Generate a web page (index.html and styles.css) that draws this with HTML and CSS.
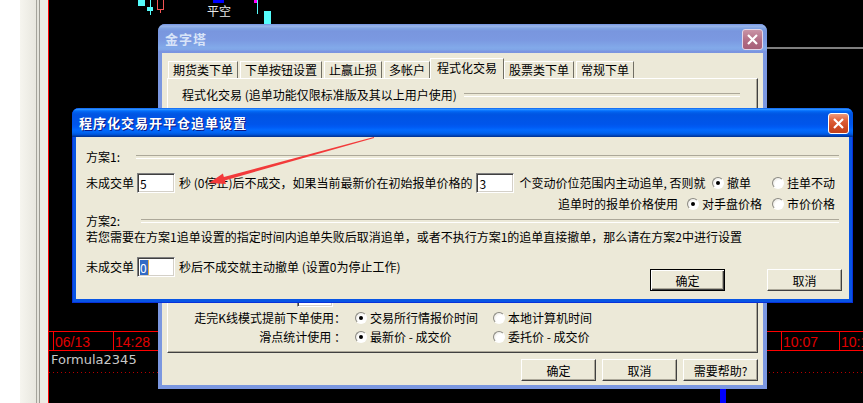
FILE: index.html
```html
<!DOCTYPE html>
<html lang="zh-CN">
<head>
    <meta charset="UTF-8">
    <title>程序化交易开平仓追单设置</title>
    <link rel="stylesheet" href="styles.css">
</head>
<body>
<div class="desktop">
    <div class="side"></div>

    <!-- chart behind the dialogs -->
    <div class="chart">
        <div class="mk k-cyan k1"></div>
        <div class="mk k-cyan k2"></div>
        <div class="mk k-cyan k3"></div>
        <div class="mk k-red"></div>
        <div class="mk k-redwick"></div>
        <div class="mk k-blue"></div>
        <span class="mk tag">平空</span>
        <div class="mk k-mag"></div>
        <div class="mk k-cyan k4"></div>
        <div class="mk k-cyan k5"></div>
        <div class="mk hline"></div>

        <div class="axis">
            <span class="tick t1">06/13</span>
            <span class="tick t2">14:28</span>
            <span class="tick t3">10:07</span>
            <span class="tick t4">10:15</span>
        </div>
        <span class="mk formula">Formula2345</span>
        <div class="mk dots"></div>
        <div class="mk vol"></div>
    </div>

    <!-- 金字塔 (inactive) -->
    <div class="win win-back">
        <div class="titlebar">
            <span>金字塔</span>
            <span class="close">
                <svg width="19" height="19" viewBox="0 0 19 19"><path d="M5 5L14 14M14 5L5 14" stroke="#fff" stroke-width="2.2"/></svg>
            </span>
        </div>
        <div class="win-body back-body">
            <div class="tabs">
                <span class="tab">期货类下单</span>
                <span class="tab">下单按钮设置</span>
                <span class="tab">止赢止损</span>
                <span class="tab">多帐户</span>
                <span class="tab on">程式化交易</span>
                <span class="tab">股票类下单</span>
                <span class="tab">常规下单</span>
            </div>
            <div class="panel">
                <div class="panel-head">程式化交易 (追单功能仅限标准版及其以上用户使用)</div>
                <div class="field peek"></div>
                <div class="krow">
                    <span class="klabel">走完K线模式提前下单使用：</span>
                    <span class="opt kopt"><i class="radio on"></i>交易所行情报价时间</span>
                    <span class="opt"><i class="radio"></i>本地计算机时间</span>
                </div>
                <div class="krow krow2">
                    <span class="klabel">滑点统计使用 ：</span>
                    <span class="opt kopt"><i class="radio on"></i>最新价 - 成交价</span>
                    <span class="opt"><i class="radio"></i>委托价 - 成交价</span>
                </div>
            </div>
            <div class="btns-back">
                <button class="btn">确定</button>
                <button class="btn">取消</button>
                <button class="btn">需要帮助?</button>
            </div>
        </div>
    </div>

    <!-- 追单设置 (active) -->
    <div class="win win-front">
        <div class="titlebar">
            <span>程序化交易开平仓追单设置</span>
            <span class="close">
                <svg width="19" height="19" viewBox="0 0 19 19"><path d="M5 5L14 14M14 5L5 14" stroke="#fff" stroke-width="2.2"/></svg>
            </span>
        </div>
        <div class="win-body front-body">
            <div class="sec">方案1:</div>
            <div class="row row1">
                <span>未成交单</span>
                <span class="field f1">5</span>
                <span>秒 (0停止)后不成交，如果当前最新价在初始报单价格的</span>
                <span class="field f2">3</span>
                <span>个变动价位范围内主动追单, 否则就</span>
                <span class="radios">
                    <span class="opt opt-a"><i class="radio on"></i>撤单</span>
                    <span class="opt opt-c"><i class="radio"></i>挂单不动</span>
                </span>
            </div>
            <div class="row row2">
                <span>追单时的报单价格使用</span>
                <span class="radios">
                    <span class="opt opt-b"><i class="radio on"></i>对手盘价格</span>
                    <span class="opt opt-c"><i class="radio"></i>市价价格</span>
                </span>
            </div>
            <div class="sec sec-2">方案2:</div>
            <div class="note">若您需要在方案1追单设置的指定时间内追单失败后取消追单，或者不执行方案1的追单直接撤单，那么请在方案2中进行设置</div>
            <div class="row3">
                <div class="row">
                    <span>未成交单</span>
                    <span class="field f1"><span class="sel">0</span></span>
                    <span>秒后不成交就主动撤单 (设置0为停止工作)</span>
                </div>
                <div class="btns-front">
                    <button class="btn default">确定</button>
                    <button class="btn">取消</button>
                </div>
            </div>
        </div>
    </div>

    <!-- red annotation arrow -->
    <svg class="arrow" width="863" height="403" viewBox="0 0 863 403">
        <polygon points="373.9,137.1 223.9,177 222.9,173.4 209,183 225.9,184 224.9,180.4 374.1,137.9" fill="#f23a3a"/>
    </svg>
</div>
</body>
</html>
```

FILE: styles.css
```css
* {
    box-sizing: border-box;
}

html, body {
    margin: 0;
    background: #000;
}

body {
    font-family: "Noto Sans CJK SC", sans-serif;
    font-size: 12px;
    line-height: 14px;
    color: #000;
}

.desktop {
    position: relative;
    width: 863px;
    height: 403px;
    overflow: hidden;
    display: flex;
}

/* left strip of the trading program */
.side {
    width: 49px;
    border-right: 1px solid #ff0000;
    background: linear-gradient(to right,
        #fff 0, #fff 20px,
        #f6f5ef 20px, #e8e7df 36px,
        #a5a49c 36px, #a5a49c 37px,
        #e4e3db 37px, #e4e3db 39px,
        #9c9b93 39px, #9c9b93 40px,
        #ecebe4 40px, #ecebe4 48px);
}

/* CHART */
.chart {
    flex: 1;
    position: relative;
    background: #000;
}

.mk {
    position: absolute;
}

.k-cyan { background: #55fcfc; }
.k1 { left: 89px; top: 0; width: 7px; height: 6px; }
.k2 { left: 101px; top: 0; width: 1px; height: 15px; }
.k3 { left: 98px; top: 7px; width: 6px; height: 4px; }
.k4 { left: 208px; top: 0; width: 1px; height: 14px; }
.k5 { left: 215px; top: 11px; width: 7px; height: 14px; }

.k-red {
    left: 108px;
    top: -1px;
    width: 7px;
    height: 11px;
    border: 1px solid #f25454;
}

.k-redwick {
    left: 111px;
    top: 10px;
    width: 1px;
    height: 3px;
    background: #f25454;
}

.k-blue {
    left: 164px;
    top: 0;
    width: 11px;
    height: 3px;
    background: #0000ff;
}

.k-mag {
    left: 205px;
    top: 0;
    width: 4px;
    height: 3px;
    background: #ff00ff;
}

.tag {
    left: 158px;
    top: 4px;
    color: #e8e8e8;
}

.hline {
    left: 651px;
    right: 0;
    top: 47px;
    height: 2px;
    background: #7f7f7f;
}

.axis {
    position: absolute;
    left: 0;
    right: 0;
    top: 331px;
    height: 20px;
    border-top: 1px solid #ff0000;
    border-bottom: 1px solid #ff0000;
}

.tick {
    position: absolute;
    top: 0;
    bottom: 0;
    padding: 2px 0 0 1px;
    border-left: 1px solid #ff0000;
    color: #e00000;
    font-family: "Liberation Sans", Arial, sans-serif;
    font-size: 14px;
    line-height: 16px;
    white-space: nowrap;
}

.t1 { left: 4px; }
.t2 { left: 64px; }
.t3 { left: 732px; }
.t4 { left: 790px; }

.formula {
    left: 2px;
    top: 352px;
    color: #c8c8c8;
    font-family: "DejaVu Sans", sans-serif;
    font-size: 13px;
    line-height: 16px;
}

.dots {
    left: 0;
    right: 0;
    top: 372px;
    height: 1px;
    background: repeating-linear-gradient(to right, #b80000 0, #b80000 1px, transparent 1px, transparent 4px);
}

.vol {
    left: 671px;
    top: 388px;
    width: 6px;
    height: 15px;
    background: #0000ff;
}

/* WINDOWS */
.win {
    position: absolute;
    display: flex;
    flex-direction: column;
    padding: 0 4px 4px;
    border-radius: 7px 7px 0 0;
}

.titlebar {
    height: 29px;
    margin: 0 -4px;
    padding: 0 4px 0 7px;
    display: flex;
    align-items: center;
    justify-content: space-between;
    border-radius: 7px 7px 0 0;
    font-size: 13px;
    font-weight: bold;
    letter-spacing: 1px;
}

.close {
    width: 21px;
    height: 21px;
    margin-top: 1px;
    border: 1px solid #fff;
    border-radius: 3px;
    display: flex;
    align-items: center;
    justify-content: center;
}

.win-body {
    flex: 1;
    background: #ece9d8;
}

.win-back {
    left: 158px;
    top: 24px;
    width: 609px;
    height: 365px;
    background: #7b97e0;
}

.win-back .titlebar {
    color: #d8e4f8;
    background: linear-gradient(#7697e7 0%, #7e9ee3 3%, #94afe8 6%, #97b4e9 8%, #82a5e4 14%, #7c9fe2 17%, #7996de 25%, #7b99e1 56%, #82a9e9 81%, #80a5e7 89%, #7b96e1 94%, #7a93df 97%, #7b97e0 100%);
}

.win-back .close {
    border-color: #e4d6e8;
    background: linear-gradient(#c994a6, #b06a82 60%, #a65f78);
}

.win-front {
    left: 72px;
    top: 108px;
    width: 781px;
    height: 195px;
    background: #0855e4;
    box-shadow: inset 1px 0 #0831d9, inset -1px 0 #0831d9, inset 0 -1px #0831d9;
}

.win-front .titlebar {
    color: #fff;
    text-shadow: 1px 1px #0a1883;
    background: linear-gradient(#0058ee 0%, #3593ff 4%, #288eff 6%, #127dff 8%, #036ffc 10%, #0262ee 14%, #0057e5 20%, #0054e3 24%, #0055eb 56%, #005bf5 66%, #026afe 76%, #0062ef 86%, #0052d6 92%, #0040ab 96%, #003092 100%);
}

.win-front .close {
    background: linear-gradient(#ee9a7c, #de5f38 35%, #cf4a22 70%, #c0401c);
}

/* classic controls */
.btn {
    width: 75px;
    height: 22px;
    padding: 0;
    background: #ece9d8;
    border: 1px solid;
    border-color: #fff #404040 #404040 #fff;
    box-shadow: inset -1px -1px #aca899;
    font-family: "Noto Sans CJK SC", sans-serif;
    font-size: 12px;
    color: #000;
}

.btn.default {
    border-color: #000;
    box-shadow: inset 1px 1px #fff, inset -1px -1px #404040, inset -2px -2px #aca899;
}

.field {
    width: 38px;
    height: 20px;
    flex: none;
    padding: 2px 0 0 2px;
    background: #fff;
    border: 1px solid;
    border-color: #808080 #fff #fff #808080;
    box-shadow: inset 1px 1px #404040, inset -1px -1px #d4d0c8;
    line-height: 15px;
}

.sel {
    display: inline-block;
    padding: 0 1px 0 0;
    background: #316ac5;
    color: #fff;
    border-right: 1px solid #e0b050;
}

.radio {
    position: relative;
    width: 12px;
    height: 12px;
    flex: none;
    border-radius: 50%;
    border: 1px solid;
    border-color: #8b8a83 #fff #fff #8b8a83;
    background: radial-gradient(circle at 65% 65%, #fff 45%, #dcdad0 100%);
}

.radio.on::after {
    content: "";
    position: absolute;
    left: 3px;
    top: 3px;
    width: 4px;
    height: 4px;
    border-radius: 50%;
    background: #000;
}

.opt {
    display: flex;
    align-items: center;
    gap: 3px;
    flex: none;
}

/* BACK DIALOG CONTENT */
.back-body {
    display: flex;
    flex-direction: column;
    padding: 6px 5px 4px;
}

.tabs {
    display: flex;
    align-items: flex-end;
    height: 19px;
    padding-left: 1px;
}

.tab {
    height: 17px;
    padding: 0 4px;
    margin-right: 2px;
    border: 1px solid;
    border-bottom: none;
    border-color: #fff #716f64 transparent #fff;
    line-height: 15px;
}

.tab.on {
    position: relative;
    z-index: 1;
    height: 21px;
    margin: 0 0 -1px -2px;
    padding: 0 6px;
    background: #ece9d8;
    line-height: 18px;
}

.panel {
    height: 275px;
    display: flex;
    flex-direction: column;
    padding: 9px 17px 8px 0;
    border: 1px solid;
    border-color: #fff #404040 #404040 #fff;
    box-shadow: inset -1px -1px #aca899;
}

.panel-head {
    display: flex;
    align-items: center;
    padding-left: 14px;
}

.panel-head::after,
.sec::after {
    content: "";
    flex: 1;
    height: 2px;
    border-top: 1px solid #aca899;
    border-bottom: 1px solid #fff;
}

.panel-head::after {
    margin-left: 7px;
}

.peek {
    margin: auto 0 0 129px;
    width: 36px;
}

.krow {
    display: flex;
    align-items: center;
    height: 14px;
    margin-top: 4px;
}

.krow2 {
    margin-top: 5px;
}

.klabel {
    width: 178px;
    text-align: right;
    white-space: nowrap;
}

.kopt {
    width: 138px;
    margin-left: 9px;
}

.btns-back {
    display: flex;
    justify-content: flex-end;
    gap: 6px;
    margin-top: 6px;
}

/* FRONT DIALOG CONTENT */
.front-body {
    padding: 13px 7px 0 10px;
}

.sec {
    display: flex;
    align-items: center;
    height: 14px;
}

.sec::after {
    margin: 0 3px 0 16px;
}

.sec-2 {
    height: 13px;
}

.sec-2::after {
    margin-left: 21px;
}

.row {
    display: flex;
    align-items: center;
    height: 21px;
    white-space: nowrap;
}

.row1 {
    margin-top: 8px;
}

.row2 {
    justify-content: flex-end;
}

.f1 {
    margin: 0 4px 0 3px;
}

.f2 {
    margin: 0 5px 0 4px;
}

.radios {
    display: flex;
    margin: 0 6px 0 auto;
}

.row2 .radios {
    margin-left: 9px;
}

.opt-a { width: 60px; }
.opt-b { width: 85px; }
.opt-c { width: 64px; }

.note {
    margin-top: 2px;
    height: 16px;
    line-height: 16px;
    white-space: nowrap;
}

.row3 {
    display: flex;
    align-items: flex-start;
    margin-top: 12px;
}

.row3 .row {
    height: 20px;
}

.btns-front {
    display: flex;
    gap: 42px;
    margin: 12px 0 0 auto;
}

.arrow {
    position: absolute;
    left: 0;
    top: 0;
    pointer-events: none;
}
```
